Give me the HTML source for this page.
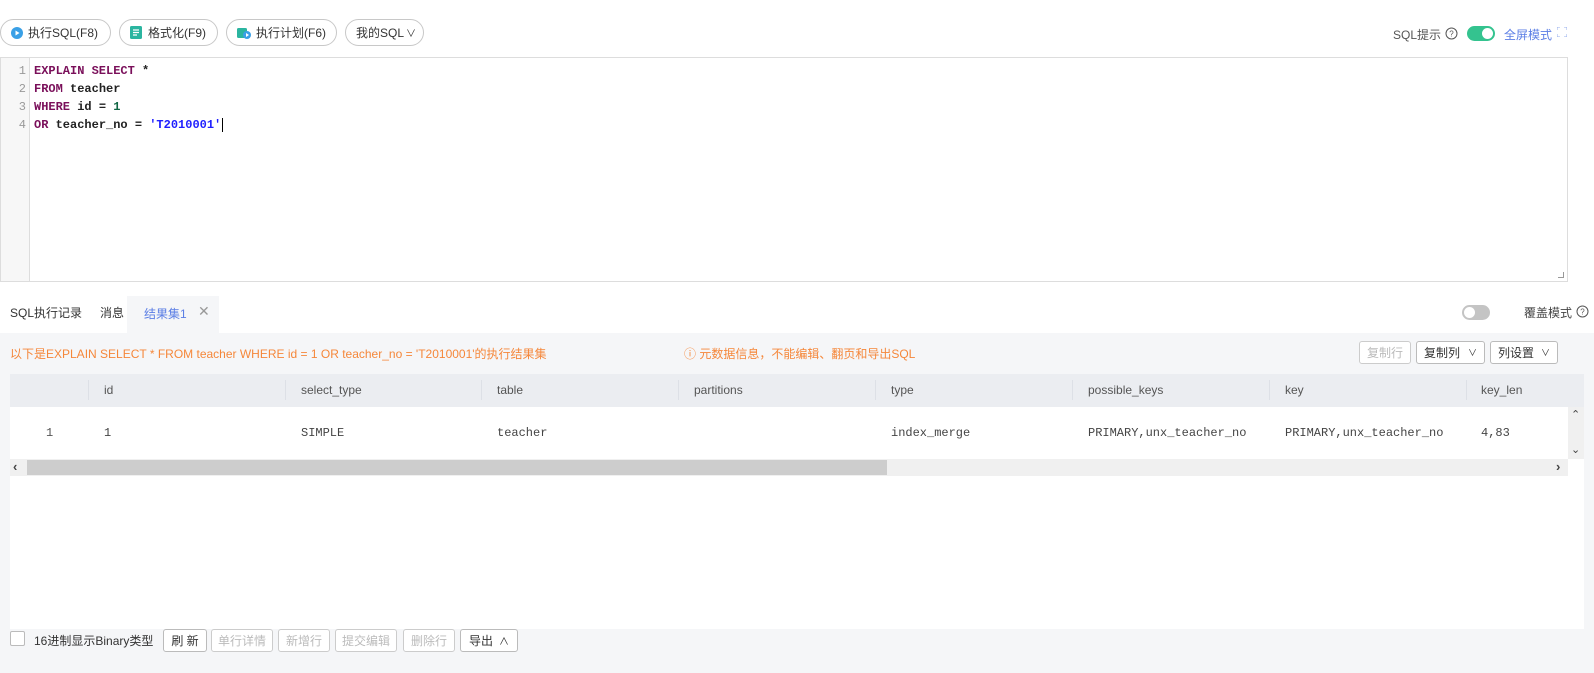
<!DOCTYPE html>
<html><head><meta charset="utf-8"><style>
*{box-sizing:border-box;margin:0;padding:0}
body{width:1594px;height:673px;background:#fff;font-family:"Liberation Sans","Noto Sans CJK SC",sans-serif;font-size:12px;color:#333;position:relative;overflow:hidden;white-space:nowrap}
.abs{position:absolute}
.btn{position:absolute;top:19px;height:27px;border:1px solid #c8c8c8;border-radius:14px;display:flex;align-items:center;padding:0 10px;font-size:12px;color:#333;background:#fff;white-space:nowrap}
.mono{font-family:"Liberation Mono","DejaVu Sans Mono",monospace}
.kw{color:#7a0f5a;font-weight:bold}
.code div{height:18px;line-height:18px;font-size:12px}
.sb{position:absolute;height:23px;border:1px solid #bbb;border-radius:3px;background:#fff;font-size:12px;display:flex;align-items:center;justify-content:center;color:#333;white-space:nowrap}
.dis{color:#bbb;border-color:#ccc}
.th{position:absolute;top:374px;height:33px;line-height:33px;color:#555;font-size:12px}
.sep{position:absolute;top:380px;width:1px;height:20px;background:#dde0e6}
.td{position:absolute;top:407px;height:52px;line-height:52px;color:#444;font-size:12px}
</style></head><body>
<div class="btn" style="left:0;width:111px"><svg width="12" height="12" style="margin-right:5px"><circle cx="6" cy="6" r="6" fill="#3aa0e6"/><path d="M4.5 3.5L8.5 6 4.5 8.5Z" fill="#fff"/></svg>执行SQL(F8)</div>
<div class="btn" style="left:119px;width:99px"><svg width="12" height="13" style="margin-right:6px"><rect width="12" height="13" rx="1.5" fill="#2bb5a0"/><path d="M3 4h6M3 6.5h6M3 9h4" stroke="#fff" stroke-width="1.2"/></svg>格式化(F9)</div>
<div class="btn" style="left:226px;width:111px"><svg width="14" height="13" style="margin-right:5px"><rect x="0" y="2" width="10" height="10" rx="1.5" fill="#2bb5a0"/><circle cx="10" cy="9" r="4" fill="#3aa0e6"/><path d="M9 7l3 2-3 2Z" fill="#fff"/></svg>执行计划(F6)</div>
<div class="btn" style="left:345px;width:79px">我的SQL<span style="font-size:10px;margin-left:2px">∨</span></div>

<div class="abs" style="left:1393px;top:26px;color:#555">SQL提示</div>
<svg class="abs" style="left:1445px;top:27px" width="13" height="13"><circle cx="6.5" cy="6.5" r="5.5" fill="none" stroke="#555"/><text x="6.5" y="9.5" font-size="8" text-anchor="middle" fill="#555" font-family="Liberation Sans">?</text></svg>
<div class="abs" style="left:1467px;top:26px;width:28px;height:15px;border-radius:8px;background:#34c38f"><div class="abs" style="right:2px;top:2px;width:11px;height:11px;border-radius:50%;background:#fff"></div></div>
<div class="abs" style="left:1504px;top:26px;color:#5b7ee5">全屏模式</div>
<svg class="abs" style="left:1557px;top:27px" width="10" height="10"><path d="M0 3V0h3M7 0h3v3M10 7v3H7M3 10H0V7" fill="none" stroke="#9ab0ee"/></svg>

<div class="abs" style="left:0;top:57px;width:1568px;height:225px;border:1px solid #ddd"></div>
<div class="abs" style="left:1px;top:58px;width:29px;height:223px;background:#f7f7f7;border-right:1px solid #ddd"></div>
<div class="abs mono code" style="left:4px;top:62px;width:22px;text-align:right;color:#999">
<div>1</div><div>2</div><div>3</div><div>4</div></div>
<div class="abs mono code" style="left:34px;top:62px;color:#222">
<div><span class="kw">EXPLAIN SELECT</span> <b>*</b></div>
<div><span class="kw">FROM</span> <b>teacher</b></div>
<div><span class="kw">WHERE</span> <b>id</b> <b>=</b> <b style="color:#116644">1</b></div>
<div><span class="kw">OR</span> <b>teacher_no</b> <b>=</b> <b style="color:#2020ff">'T2010001'</b><span style="border-left:1px solid #000;margin-left:1px"></span></div>
</div>
<div class="abs" style="left:1558px;top:272px;width:6px;height:6px;border-right:1px solid #999;border-bottom:1px solid #999"></div>

<div class="abs" style="left:10px;top:304px;color:#333;font-size:12px">SQL执行记录</div>
<div class="abs" style="left:100px;top:304px;color:#333">消息</div>
<div class="abs" style="left:127px;top:296px;width:92px;height:37px;background:#f5f6f8"></div>
<div class="abs" style="left:144px;top:305px;color:#5b7ee5">结果集1</div>
<div class="abs" style="left:198px;top:303px;color:#999;font-size:14px">✕</div>
<div class="abs" style="left:1462px;top:305px;width:28px;height:15px;border-radius:8px;background:#c4c4c4"><div class="abs" style="left:2px;top:2px;width:11px;height:11px;border-radius:50%;background:#fff"></div></div>
<div class="abs" style="left:1524px;top:304px;color:#444">覆盖模式</div>
<svg class="abs" style="left:1576px;top:305px" width="13" height="13"><circle cx="6.5" cy="6.5" r="5.5" fill="none" stroke="#555"/><text x="6.5" y="9.5" font-size="8" text-anchor="middle" fill="#555" font-family="Liberation Sans">?</text></svg>

<div class="abs" style="left:0;top:333px;width:1594px;height:340px;background:#f5f6f8"></div>
<div class="abs" style="left:10px;top:345px;color:#f5873a">以下是EXPLAIN SELECT * FROM teacher WHERE id = 1 OR teacher_no = 'T2010001'的执行结果集</div>
<div class="abs" style="left:684px;top:345px;color:#f5873a">ⓘ 元数据信息，不能编辑、翻页和导出SQL</div>
<div class="sb dis" style="left:1359px;top:341px;width:52px">复制行</div>
<div class="sb" style="left:1416px;top:341px;width:69px;justify-content:space-between;padding:0 7px">复制列<span style="font-size:9px">∨</span></div>
<div class="sb" style="left:1490px;top:341px;width:68px;justify-content:space-between;padding:0 7px">列设置<span style="font-size:9px">∨</span></div>

<div class="abs" style="left:10px;top:374px;width:1574px;height:255px;background:#fff"></div>
<div class="abs" style="left:10px;top:374px;width:1574px;height:33px;background:#ebedf1"></div>
<div class="abs" style="left:1568px;top:407px;width:16px;height:52px;background:#f0f0f0"></div>
<div class="sep" style="left:88px"></div><div class="sep" style="left:285px"></div><div class="sep" style="left:481px"></div><div class="sep" style="left:678px"></div><div class="sep" style="left:875px"></div><div class="sep" style="left:1072px"></div><div class="sep" style="left:1269px"></div><div class="sep" style="left:1466px"></div>
<div class="th" style="left:104px">id</div><div class="th" style="left:301px">select_type</div><div class="th" style="left:497px">table</div><div class="th" style="left:694px">partitions</div><div class="th" style="left:891px">type</div><div class="th" style="left:1088px">possible_keys</div><div class="th" style="left:1285px">key</div><div class="th" style="left:1481px">key_len</div>
<div class="td mono" style="left:46px;color:#555">1</div>
<div class="td mono" style="left:104px">1</div><div class="td mono" style="left:301px">SIMPLE</div><div class="td mono" style="left:497px">teacher</div><div class="td mono" style="left:891px">index_merge</div><div class="td mono" style="left:1088px">PRIMARY,unx_teacher_no</div><div class="td mono" style="left:1285px">PRIMARY,unx_teacher_no</div><div class="td mono" style="left:1481px">4,83</div>
<div class="abs" style="left:1571px;top:408px;font-size:11px;color:#444">⌃</div>
<div class="abs" style="left:1571px;top:443px;font-size:11px;color:#444">⌄</div>
<div class="abs" style="left:10px;top:459px;width:1558px;height:17px;background:#f0f0f0"></div>
<div class="abs" style="left:27px;top:460px;width:860px;height:15px;background:#cdcdcd"></div>
<div class="abs" style="left:13px;top:459px;font-size:13px;color:#444;font-weight:bold">‹</div>
<div class="abs" style="left:1556px;top:459px;font-size:13px;color:#444;font-weight:bold">›</div>

<div class="abs" style="left:10px;top:631px;width:15px;height:15px;border:1px solid #bbb;background:#fff;border-radius:2px"></div>
<div class="abs" style="left:34px;top:632px;color:#333">16进制显示Binary类型</div>
<div class="sb" style="left:163px;top:629px;width:44px">刷 新</div>
<div class="sb dis" style="left:211px;top:629px;width:62px">单行详情</div>
<div class="sb dis" style="left:278px;top:629px;width:52px">新增行</div>
<div class="sb dis" style="left:335px;top:629px;width:62px">提交编辑</div>
<div class="sb dis" style="left:403px;top:629px;width:52px">删除行</div>
<div class="sb" style="left:460px;top:629px;width:58px;justify-content:space-between;padding:0 8px">导出<span style="font-size:10px">∧</span></div>
</body></html>
